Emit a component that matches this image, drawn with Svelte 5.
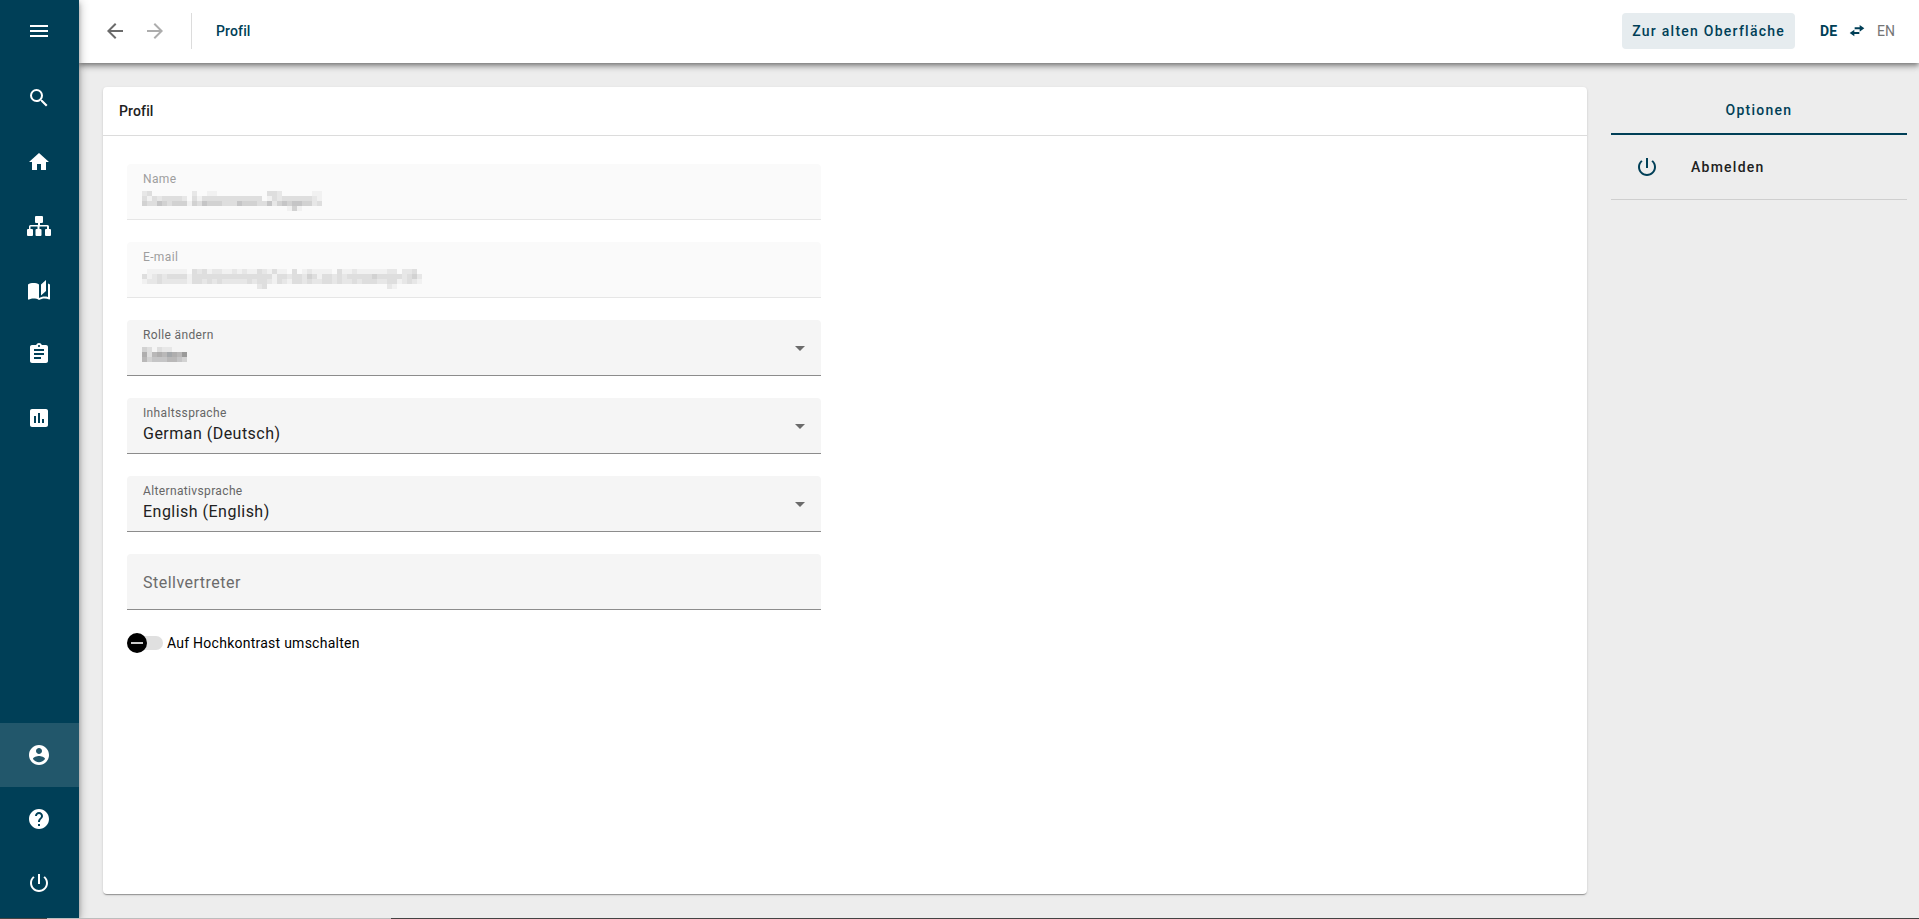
<script lang="ts">
	interface NavItem {
		label: string;
		icon: string;
		active?: boolean;
	}

	const icons: Record<string, string> = {
		menu: 'M3 6h18v2H3V6m0 5h18v2H3v-2m0 5h18v2H3v-2z',
		search:
			'M15.5 14h-.79l-.28-.27A6.47 6.47 0 0 0 16 9.5 6.5 6.5 0 1 0 9.5 16c1.61 0 3.09-.59 4.23-1.57l.27.28v.79l5 4.99L20.49 19l-4.99-5zm-6 0C7.01 14 5 11.99 5 9.5S7.01 5 9.5 5 14 7.01 14 9.5 11.99 14 9.5 14z',
		home: 'M10 20v-6h4v6h5v-8h3L12 3 2 12h3v8z',
		sitemap:
			'M9 2h6q1 0 1 1v5q0 1-1 1h-2v2h7.500q1.500 0 1.500 1.500V15h1q1 0 1 1v5q0 1-1 1h-4q-1 0-1-1v-5q0-1 1-1h1v-2.500h-7.500V15h1q1 0 1 1v5q0 1-1 1h-4q-1 0-1-1v-5q0-1 1-1h1v-2.500H3.500V15h1.500q1 0 1 1v5q0 1-1 1H1q-1 0-1-1v-5q0-1 1-1h1v-2.500Q2 11 3.500 11H11V9H9Q8 9 8 8V3q0-1 1-1z',
		book: 'M19 2L14 6.5V17.500L19 13V2M6.500 5C4.550 5 2.450 5.400 1 6.500V21.160C1 21.410 1.250 21.660 1.500 21.660C1.600 21.660 1.650 21.590 1.750 21.590C3.100 20.940 5.050 20.500 6.500 20.500C8.450 20.500 10.550 20.900 12 22C13.350 21.150 15.800 20.500 17.500 20.500C19.150 20.500 20.850 20.810 22.250 21.560C22.350 21.610 22.400 21.590 22.500 21.590C22.750 21.590 23 21.340 23 21.090V6.500C22.400 6.050 21.750 5.750 21 5.500V19C19.900 18.650 18.700 18.500 17.500 18.500C15.800 18.500 13.350 19.150 12 20V6.500C10.550 5.400 8.450 5 6.500 5Z',
		clipboard:
			'M19 3h-4.180C14.400 1.840 13.300 1 12 1c-1.300 0-2.400.84-2.820 2H5c-1.100 0-2 .9-2 2v14c0 1.100.9 2 2 2h14c1.100 0 2-.9 2-2V5c0-1.100-.9-2-2-2zm-7 0c.55 0 1 .45 1 1s-.45 1-1 1-1-.45-1-1 .45-1 1-1zm2 14H7v-2h7v2zm3-4H7v-2h10v2zm0-4H7V7h10v2z',
		chart: 'M19 3H5c-1.100 0-2 .9-2 2v14c0 1.100.9 2 2 2h14c1.100 0 2-.9 2-2V5c0-1.100-.9-2-2-2zM9 17H7v-7h2v7zm4 0h-2V7h2v10zm4 0h-2v-4h2v4z',
		account:
			'M12 2C6.480 2 2 6.480 2 12s4.480 10 10 10 10-4.480 10-10S17.520 2 12 2zm0 3c1.660 0 3 1.340 3 3s-1.340 3-3 3-3-1.340-3-3 1.340-3 3-3zm0 14.200c-2.500 0-4.710-1.280-6-3.220.03-1.990 4-3.080 6-3.080 1.990 0 5.970 1.090 6 3.080-1.290 1.940-3.500 3.220-6 3.220z',
		help: 'M12 2C6.480 2 2 6.480 2 12s4.480 10 10 10 10-4.480 10-10S17.520 2 12 2zm1 17h-2v-2h2v2zm2.070-7.750l-.9.920C13.450 12.900 13 13.500 13 15h-2v-.5c0-1.100.45-2.100 1.170-2.830l1.240-1.260c.37-.36.590-.86.590-1.410 0-1.100-.9-2-2-2s-2 .9-2 2H8c0-2.210 1.790-4 4-4s4 1.790 4 4c0 .88-.36 1.680-.93 2.250z',
		power:
			'M13 3h-2v10h2V3zm4.830 2.170l-1.420 1.420C17.990 7.860 19 9.810 19 12c0 3.870-3.130 7-7 7s-7-3.130-7-7c0-2.190 1.010-4.140 2.580-5.420L6.170 5.170C4.230 6.820 3 9.260 3 12c0 4.970 4.030 9 9 9s9-4.030 9-9c0-2.740-1.230-5.180-3.170-6.830z',
		back: 'M20 11H7.830l5.590-5.590L12 4l-8 8 8 8 1.410-1.410L7.830 13H20v-2z',
		forward: 'M12 4l-1.410 1.410L16.170 11H4v2h12.170l-5.580 5.590L12 20l8-8z',
		swap: 'M16 3l7 5-7 5V9.500H8.500v-3H16V3zM8 10v3.500h7.500v3H8V20l-7-5 7-5z'
	};

	const mainNav: NavItem[] = [
		{ label: 'Suche', icon: 'search' },
		{ label: 'Startseite', icon: 'home' },
		{ label: 'Struktur', icon: 'sitemap' },
		{ label: 'Katalog', icon: 'book' },
		{ label: 'Aufgaben', icon: 'clipboard' },
		{ label: 'Berichte', icon: 'chart' }
	];

	const userNav: NavItem[] = [
		{ label: 'Profil', icon: 'account', active: true },
		{ label: 'Hilfe', icon: 'help' },
		{ label: 'Abmelden', icon: 'power' }
	];

	// Masked values: one digit per 5px block, 0 is empty, 9 is darkest
	const shades = ['', '#f1f1f1', '#e7e7e7', '#dedede', '#d2d2d2', '#c5c5c6', '#b9b8b8', '#afaeae', '#a4a7aa', '#9a9a99'];

	const masks = {
		name: [
			'230000000020011000000000033200000011',
			'313233332031333333333333013233333321',
			'433543444143544433354443352454554423',
			'000000000000000000000000000001410000'
		],
		email: [
			'01111111103231221121211321311030121111031121111112202230',
			'31232333313333333333333333133233243133232333334333332342',
			'12232222213323232222232332132133232233232232333223312321',
			'00000000000000000000000230000000000000000000000002100000'
		],
		role: ['430322000', '736768769', '645556654']
	};

	let contentLanguage = $state('de');
	let alternativeLanguage = $state('en');
	let deputy = $state('');
	let highContrast = $state(false);
</script>

{#snippet icon(name: string)}
	<svg class="icon" viewBox="0 0 24 24" aria-hidden="true"><path d={icons[name]} /></svg>
{/snippet}

{#snippet mask(rows: string[])}
	<svg
		class="mask"
		width={rows[0].length * 5}
		height={rows.length * 5}
		shape-rendering="crispEdges"
		aria-hidden="true"
	>
		{#each rows as row, y}
			{#each row as level, x}
				{#if level !== '0'}
					<rect x={x * 5} y={y * 5} width="5" height="5" fill={shades[Number(level)]} />
				{/if}
			{/each}
		{/each}
	</svg>
{/snippet}

{#snippet navLink(item: NavItem)}
	<a href="#{item.icon}" class="nav-link" class:active={item.active} aria-label={item.label}>
		{@render icon(item.icon)}
	</a>
{/snippet}

<div class="app">
	<div class="shell">
		<nav class="sidebar">
			<button type="button" class="menu" aria-label="Menü">{@render icon('menu')}</button>
			{#each mainNav as item}
				{@render navLink(item)}
			{/each}
			<div class="spacer"></div>
			{#each userNav as item}
				{@render navLink(item)}
			{/each}
		</nav>

		<div class="page">
			<header class="topbar">
				<button type="button" class="history" aria-label="Zurück">{@render icon('back')}</button>
				<button type="button" class="history" aria-label="Vorwärts" disabled>
					{@render icon('forward')}
				</button>
				<span class="divider"></span>
				<span class="title">Profil</span>
				<div class="spacer"></div>
				<button type="button" class="old-ui">Zur alten Oberfläche</button>
				<button type="button" class="language">
					<b>DE</b>
					{@render icon('swap')}
					<span>EN</span>
				</button>
			</header>

			<div class="content">
				<main class="card">
					<h1>Profil</h1>
					<form>
						<div class="field disabled">
							<label for="name">Name</label>
							<input id="name" type="text" disabled />
							{@render mask(masks.name)}
						</div>
						<div class="field disabled">
							<label for="email">E-mail</label>
							<input id="email" type="email" disabled />
							{@render mask(masks.email)}
						</div>
						<div class="field dropdown">
							<label for="role">Rolle ändern</label>
							<select id="role"><option value=""></option></select>
							{@render mask(masks.role)}
						</div>
						<div class="field dropdown">
							<label for="content-language">Inhaltssprache</label>
							<select id="content-language" bind:value={contentLanguage}>
								<option value="de">German (Deutsch)</option>
								<option value="en">English (English)</option>
							</select>
						</div>
						<div class="field dropdown">
							<label for="alternative-language">Alternativsprache</label>
							<select id="alternative-language" bind:value={alternativeLanguage}>
								<option value="de">German (Deutsch)</option>
								<option value="en">English (English)</option>
							</select>
						</div>
						<div class="field">
							<input
								type="text"
								class="tall"
								placeholder="Stellvertreter"
								aria-label="Stellvertreter"
								bind:value={deputy}
							/>
						</div>
						<label class="toggle">
							<input type="checkbox" role="switch" bind:checked={highContrast} />
							Auf Hochkontrast umschalten
						</label>
					</form>
				</main>

				<aside>
					<h2>Optionen</h2>
					<button type="button" class="option">
						{@render icon('power')}
						Abmelden
					</button>
				</aside>
			</div>
		</div>
	</div>
	<div class="edge"><span></span><span></span><span></span></div>
</div>

<style>
	:global(body) {
		margin: 0;
	}

	.app {
		--primary: #003f57;
		display: flex;
		flex-direction: column;
		min-height: 100vh;
		background-color: #ededed;
		color: #212121;
		font-family: Roboto, 'Liberation Sans', sans-serif;
		font-size: 14px;
	}

	.app * {
		box-sizing: border-box;
	}

	button,
	input,
	select {
		margin: 0;
		padding: 0;
		border: none;
		background: none;
		color: inherit;
		font: inherit;
	}

	button {
		cursor: pointer;
	}

	.icon {
		display: block;
		width: 24px;
		height: 24px;
		fill: currentColor;
	}

	.spacer {
		flex: 1;
	}

	.shell {
		display: flex;
		flex: 1;
	}

	.sidebar {
		z-index: 2;
		display: flex;
		flex-direction: column;
		flex: none;
		width: 79px;
		padding-bottom: 3px;
		background-color: var(--primary);
		color: white;
		box-shadow:
			0 2px 4px -1px rgba(0, 0, 0, 0.2),
			0 4px 5px 0 rgba(0, 0, 0, 0.14),
			0 1px 10px 0 rgba(0, 0, 0, 0.3);
	}

	.menu,
	.nav-link {
		display: flex;
		align-items: center;
		height: 64px;
		padding-left: 27px;
		color: white;
	}

	.menu {
		height: 62px;
		margin-bottom: 4px;
	}

	.active {
		background-color: #22576b;
	}

	.page {
		display: flex;
		flex-direction: column;
		flex: 1;
		min-width: 0;
	}

	.topbar {
		z-index: 1;
		display: flex;
		align-items: center;
		height: 63px;
		padding: 0 24px 1px;
		background-color: white;
		color: var(--primary);
		box-shadow:
			0 2px 4px -1px rgba(0, 0, 0, 0.3),
			0 4px 5px 0 rgba(0, 0, 0, 0.2),
			0 1px 10px 0 rgba(0, 0, 0, 0.2);
	}

	.history {
		margin-right: 16px;
		color: #6b6b6b;
	}

	.history:disabled {
		color: #adadad;
	}

	.divider {
		width: 1px;
		height: 36px;
		margin: 0 24px 0 8px;
		background-color: #dcdcdc;
	}

	.title,
	h1 {
		font-size: 14px;
		font-weight: 500;
		letter-spacing: 0.01em;
	}

	.old-ui {
		height: 36px;
		padding: 0 10px;
		border-radius: 4px;
		background-color: #e6ecef;
		font-weight: 500;
		letter-spacing: 0.0892857em;
	}

	.language {
		display: flex;
		align-items: center;
		gap: 12px;
		margin-left: 25px;
	}

	.language .icon {
		width: 16px;
		height: 16px;
	}

	.language span {
		color: #757575;
	}

	.content {
		display: flex;
		flex: 1;
		gap: 24px;
		padding: 24px 12px 24px 24px;
	}

	.card {
		flex: 1;
		border-radius: 4px;
		background-color: white;
		box-shadow:
			0 2px 1px -1px rgba(0, 0, 0, 0.2),
			0 1px 1px 0 rgba(0, 0, 0, 0.14),
			0 1px 3px 0 rgba(0, 0, 0, 0.12);
	}

	h1 {
		margin: 0;
		padding: 0 16px;
		border-bottom: 1px solid #dcdcdc;
		line-height: 48px;
	}

	form {
		display: flex;
		flex-direction: column;
		gap: 22px;
		width: 50%;
		padding: 28px 24px;
	}

	.field {
		position: relative;
		display: flex;
		flex-direction: column;
		height: 56px;
		padding-top: 7px;
		border-bottom: 1px solid #8c8c8c;
		border-radius: 4px 4px 0 0;
		background-color: #f5f5f5;
	}

	.field label {
		padding: 0 16px;
		color: #666666;
		font-size: 12px;
		line-height: 16px;
		letter-spacing: 0.03em;
	}

	.field input,
	.field select {
		width: 100%;
		height: 24px;
		padding: 0 16px;
		font-size: 16px;
		letter-spacing: 0.03em;
		appearance: none;
	}

	.dropdown::after {
		content: '';
		position: absolute;
		top: 26px;
		right: 16px;
		border: 5px solid transparent;
		border-top-color: #6b6b6b;
		border-bottom: none;
		pointer-events: none;
	}

	.field .tall {
		height: 42px;
	}

	.field input::placeholder {
		color: #6b6b6b;
		opacity: 1;
	}

	.disabled {
		border-color: #e6e6e6;
		background-color: #fafafa;
	}

	.disabled label {
		color: #9e9e9e;
	}

	.mask {
		position: absolute;
		top: 27px;
		left: 15px;
		pointer-events: none;
	}

	.toggle {
		display: flex;
		align-items: center;
		gap: 4px;
		height: 22px;
		color: black;
		letter-spacing: 0.0178571em;
	}

	.toggle input {
		display: flex;
		align-items: center;
		width: 36px;
		height: 14px;
		border-radius: 7px;
		background-color: #e0e0e0;
		appearance: none;
	}

	.toggle input::before {
		content: '';
		width: 20px;
		height: 20px;
		flex: none;
		border-radius: 50%;
		background: linear-gradient(#cccccc, #cccccc) center / 12px 2px no-repeat black;
	}

	.toggle input:checked::before {
		margin-left: 16px;
	}

	aside {
		flex: none;
		width: 296px;
	}

	h2 {
		margin: 0;
		border-bottom: 2px solid var(--primary);
		color: var(--primary);
		font-size: 14px;
		font-weight: 500;
		line-height: 46px;
		letter-spacing: 0.0892857em;
		text-align: center;
	}

	.option {
		display: flex;
		align-items: center;
		gap: 32px;
		width: 100%;
		height: 65px;
		padding: 0 24px;
		border-bottom: 1px solid #cfcfcf;
		font-weight: 500;
		letter-spacing: 0.0892857em;
	}

	.option .icon {
		color: var(--primary);
	}

	/* Window edge along the bottom */
	.edge {
		z-index: 3;
		display: grid;
		grid-template-columns: 47px 344px 1fr;
		height: 1px;
	}

	.edge span {
		background-color: #444444;
	}

	.edge span:nth-child(2) {
		background-color: #bdbdbd;
	}
</style>
